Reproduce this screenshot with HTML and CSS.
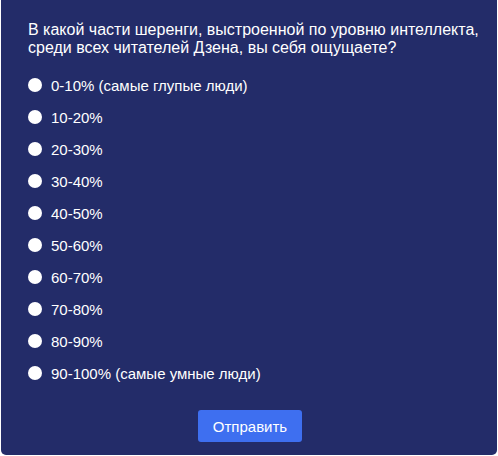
FILE: index.html
```
<!DOCTYPE html>
<html>
<head>
<meta charset="utf-8">
<link rel="stylesheet" href="styles.css">
</head>
<body>
<div class="card">
  <div class="question">В какой части шеренги, выстроенной по уровню интеллекта, среди всех читателей Дзена, вы себя ощущаете?</div>
  <ul class="options">
    <li class="option"><span class="radio"></span><span class="label">0-10% (самые глупые люди)</span></li>
    <li class="option"><span class="radio"></span><span class="label">10-20%</span></li>
    <li class="option"><span class="radio"></span><span class="label">20-30%</span></li>
    <li class="option"><span class="radio"></span><span class="label">30-40%</span></li>
    <li class="option"><span class="radio"></span><span class="label">40-50%</span></li>
    <li class="option"><span class="radio"></span><span class="label">50-60%</span></li>
    <li class="option"><span class="radio"></span><span class="label">60-70%</span></li>
    <li class="option"><span class="radio"></span><span class="label">70-80%</span></li>
    <li class="option"><span class="radio"></span><span class="label">80-90%</span></li>
    <li class="option"><span class="radio"></span><span class="label">90-100% (самые умные люди)</span></li>
  </ul>
  <div class="actions"><button class="submit">Отправить</button></div>
</div>
</body>
</html>
```
FILE: styles.css
```
html, body {
  margin: 0;
  padding: 0;
  background: #ffffff;
}
body {
  font-family: "Liberation Sans", Arial, sans-serif;
  color: #ffffff;
}
.card {
  box-sizing: border-box;
  margin-left: 1px;
  width: 496px;
  height: 455px;
  background: #232c69;
  border-radius: 0 0 5px 5px;
  padding: 21px 12px 0 27px;
}
.question {
  font-size: 16px;
  line-height: 18px;
  margin-bottom: 19px;
}
.options {
  list-style: none;
  margin: 0;
  padding: 0;
  display: flex;
  flex-direction: column;
  gap: 14px;
}
.option {
  display: flex;
  align-items: center;
  height: 18px;
  font-size: 15px;
}
.radio {
  width: 14px;
  height: 14px;
  border-radius: 50%;
  background: #ffffff;
  margin-right: 9px;
  flex: none;
}
.actions {
  display: flex;
  justify-content: center;
  margin-top: 28px;
  padding-right: 15px;
}
.submit {
  background: #3e6ff0;
  color: #ffffff;
  border: none;
  border-radius: 3px;
  width: 104px;
  height: 32px;
  font-family: "Liberation Sans", Arial, sans-serif;
  font-size: 15px;
  padding: 0;
  margin-left: 2px;
}
```
